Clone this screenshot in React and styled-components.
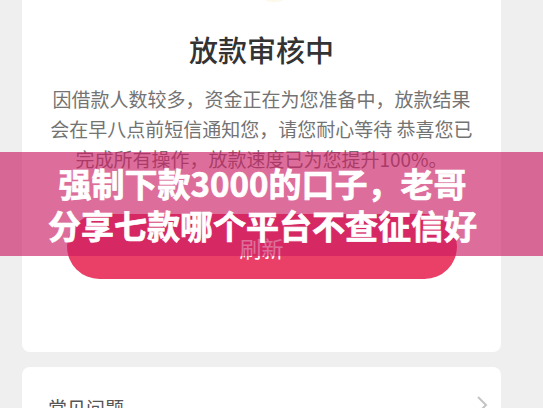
import styled, { createGlobalStyle } from 'styled-components';

const GlobalStyle = createGlobalStyle`
  html, body {
    margin: 0;
    padding: 0;
    background: #efefef;
    overflow: hidden;
  }
  body {
    font-family: "Noto Sans CJK SC", "Noto Sans", sans-serif;
  }
`;

const Page = styled.div`
  position: relative;
  width: 543px;
  height: 408px;
  overflow: hidden;
  padding: 0 42px 0 22px;
  box-sizing: border-box;
`;

const Card = styled.div`
  background: #fff;
  border-radius: 8px;
  margin-top: ${props => props.$offset || '0'};
  display: flex;
  flex-direction: column;
  align-items: center;
  padding: 0 24px 73px;
  box-sizing: border-box;
`;

const IconWrap = styled.div`
  height: 50px;
  width: 100%;
  display: flex;
  justify-content: center;
  align-items: flex-start;
`;

const Title = styled.h1`
  margin: 0;
  font-size: 29px;
  line-height: 39px;
  font-weight: 500;
  color: #333;
`;

const Message = styled.p`
  margin: 15px 0 0;
  font-size: 19px;
  line-height: 30px;
  color: #737373;
  text-align: center;
`;

const RefreshButton = styled.button`
  margin-top: 40px;
  width: 390px;
  height: 65px;
  border: none;
  border-radius: 33px;
  background: #ea4068;
  color: #fff;
  font-family: inherit;
  font-size: 22px;
`;

const FaqCard = styled.div`
  margin-top: 15px;
  background: #fff;
  border-radius: 8px;
  height: 80px;
  display: flex;
  align-items: flex-start;
  justify-content: space-between;
  padding: 27px 12px 0 26px;
  box-sizing: border-box;
`;

const FaqLabel = styled.span`
  font-size: 19px;
  line-height: 28px;
  color: #555;
`;

const Banner = styled.div`
  position: absolute;
  top: 152px;
  left: 0;
  right: 0;
  height: 104px;
  background: rgba(202, 28, 99, 0.64);
  display: flex;
  flex-direction: column;
  align-items: center;
  justify-content: center;
  padding: 0 40px 0 22px;
  box-sizing: border-box;
`;

const BannerLine = styled.div`
  color: #fff;
  font-size: 33px;
  line-height: 42px;
  font-weight: 700;
  -webkit-text-stroke: 0.7px #fff;
  white-space: nowrap;
`;

const App = () => (
  <>
    <GlobalStyle />
    <Page>
      <Card $offset="-20px">
        <IconWrap>
          <svg width="80" height="50" viewBox="0 0 80 50">
            <ellipse cx="52" cy="2" rx="22" ry="20" fill="#fcf8ea" />
          </svg>
        </IconWrap>
        <Title>放款审核中</Title>
        <Message>
          因借款人数较多，资金正在为您准备中，放款结果会在早八点前短信通知您，请您耐心等待 恭喜您已完成所有操作，放款速度已为您提升100%。
        </Message>
        <RefreshButton>刷新</RefreshButton>
      </Card>
      <FaqCard>
        <FaqLabel>常见问题</FaqLabel>
        <svg width="14" height="22" viewBox="0 0 14 22">
          <path d="M3 3 L11 11 L3 19" fill="none" stroke="#c4c4c4" strokeWidth="2" />
        </svg>
      </FaqCard>
      <Banner>
        <BannerLine>强制下款3000的口子，老哥</BannerLine>
        <BannerLine>分享七款哪个平台不查征信好</BannerLine>
      </Banner>
    </Page>
  </>
);

export default App;
